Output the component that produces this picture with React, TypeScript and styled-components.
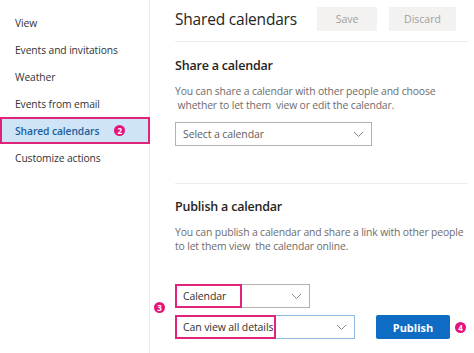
import styled, { createGlobalStyle } from "styled-components";

const GlobalStyle = createGlobalStyle`
    body {
        margin: 0;
        background: #ffffff;
        font-family: "Open Sans", "Noto Sans", sans-serif;
        color: #323130;
    }
`

const Page = styled.div`
    display: flex;
    flex-direction: row;
    width: 474px;
    height: 353px;
    overflow: hidden;
`

const Sidebar = styled.nav`
    width: 150px;
    flex-shrink: 0;
    border-right: 1px solid #ebebeb;
    padding-top: 9px;
    box-sizing: border-box;
    display: flex;
    flex-direction: column;
`

const NavItem = styled.div<{ $active?: boolean }>`
    height: 27px;
    flex-shrink: 0;
    display: flex;
    align-items: center;
    gap: 15px;
    box-sizing: border-box;
    font-size: 10.3px;
    letter-spacing: -0.1px;
    color: ${(p) => (p.$active ? "#1b5f9e" : "#333333")};
    font-weight: ${(p) => (p.$active ? 600 : 400)};
    background: ${(p) => (p.$active ? "#cfe4f6" : "transparent")};
    border: ${(p) => (p.$active ? "2px solid #e0247c" : "none")};
    padding-left: ${(p) => (p.$active ? "13px" : "15px")};
    margin-right: -1px;
`

const Badge = styled.span`
    display: inline-flex;
    width: 11px;
    height: 11px;
    border-radius: 50%;
    background: #e6137a;
    color: #ffffff;
    font-size: 8px;
    font-weight: 700;
    letter-spacing: 0;
    justify-content: center;
    align-items: center;
    line-height: 1;
    flex-shrink: 0;
`

const Main = styled.main`
    flex: 1;
    padding: 0 10px 0 25px;
    display: flex;
    flex-direction: column;
    & > * {
        flex-shrink: 0;
    }
`

const Header = styled.div`
    height: 41px;
    border-bottom: 1px solid #ededed;
    display: flex;
    align-items: flex-start;
`

const Title = styled.h1`
    margin: 7px 0 0 0;
    font-size: 15.5px;
    font-weight: 400;
    letter-spacing: -0.2px;
    line-height: 24px;
    color: #252423;
    width: 142px;
    white-space: nowrap;
`

const GrayButton = styled.button<{ $w: number }>`
    margin-top: 7px;
    margin-right: 12px;
    width: ${(p) => p.$w}px;
    height: 24px;
    border: none;
    background: #f3f2f1;
    color: #a19f9d;
    font-family: "Open Sans", sans-serif;
    font-size: 10.5px;
    padding: 0;
`

const Section = styled.section<{ $divider?: boolean }>`
    display: flex;
    flex-direction: column;
    padding-bottom: ${(p) => (p.$divider ? "37px" : "0")};
    border-bottom: ${(p) => (p.$divider ? "1px solid #ededed" : "none")};
`

const SectionTitle = styled.h2<{ $top: number }>`
    margin: ${(p) => p.$top}px 0 0 0;
    font-size: 12.5px;
    font-weight: 600;
    letter-spacing: -0.2px;
    line-height: 20px;
    color: #252423;
`

const Desc = styled.p`
    margin: 8px 0 0 0;
    font-size: 10.4px;
    letter-spacing: -0.15px;
    line-height: 14px;
    color: #6e6d6c;
    white-space: nowrap;
`

const Select = styled.div<{ $w: number; $blue?: boolean }>`
    position: relative;
    width: ${(p) => p.$w}px;
    height: 24px;
    box-sizing: border-box;
    border: 1px solid ${(p) => (p.$blue ? "#8fb6dc" : "#b3b0ad")};
    display: flex;
    align-items: center;
    justify-content: space-between;
    padding: 0 7px 0 7px;
    font-size: 10.5px;
    letter-spacing: -0.1px;
    color: #323130;
    background: #fff;
`

const Placeholder = styled.span`
    color: #605e5c;
`

const Highlight = styled.div<{ $w: number }>`
    position: absolute;
    left: -1px;
    top: -1px;
    width: ${(p) => p.$w}px;
    height: 24px;
    box-sizing: border-box;
    border: 2px solid #e0247c;
`

const Controls = styled.div`
    position: relative;
    margin-top: 31px;
    display: flex;
    flex-direction: column;
    gap: 7px;
`

const Row = styled.div`
    display: flex;
    align-items: center;
`

const PublishButton = styled.button`
    margin-left: 21px;
    width: 74px;
    height: 24px;
    border: none;
    border-radius: 2px;
    background: #0f6cc4;
    color: #ffffff;
    font-family: "Open Sans", sans-serif;
    font-weight: 700;
    font-size: 11px;
    padding: 0;
`

const FloatBadge = styled(Badge)<{ $left: number; $top: number }>`
    position: absolute;
    left: ${(p) => p.$left}px;
    top: ${(p) => p.$top}px;
`

function Chevron() {
    return (
        <svg width="11" height="7" viewBox="0 0 11 7">
            <path d="M1 1 L5.5 5.5 L10 1" fill="none" stroke="#8a8886" strokeWidth="1" />
        </svg>
    );
}

const navItems = ["View", "Events and invitations", "Weather", "Events from email", "Shared calendars", "Customize actions"];

export default function App() {
    return (
        <>
            <GlobalStyle />
            <Page>
                <Sidebar>
                    {navItems.map((item) => (
                        <NavItem key={item} $active={item === "Shared calendars"}>
                            {item}
                            {item === "Shared calendars" && <Badge>2</Badge>}
                        </NavItem>
                    ))}
                </Sidebar>
                <Main>
                    <Header>
                        <Title>Shared calendars</Title>
                        <GrayButton $w={60}>Save</GrayButton>
                        <GrayButton $w={67}>Discard</GrayButton>
                    </Header>

                    <Section $divider>
                        <SectionTitle $top={14}>Share a calendar</SectionTitle>
                        <Desc>
                            You can share a calendar with other people and choose<br />
                            &nbsp;whether to let them &nbsp;view or edit the calendar.
                        </Desc>
                        <div style={{ marginTop: 10 }}>
                            <Select $w={197}>
                                <Placeholder>Select a calendar</Placeholder>
                                <Chevron />
                            </Select>
                        </div>
                    </Section>

                    <Section>
                        <SectionTitle $top={13}>Publish a calendar</SectionTitle>
                        <Desc>
                            You can publish a calendar and share a link with other people<br />
                            to let them view &nbsp;the calendar online.
                        </Desc>
                        <Controls>
                            <Row>
                                <Select $w={135}>
                                    <Highlight $w={67} />
                                    <span>Calendar</span>
                                    <Chevron />
                                </Select>
                            </Row>
                            <Row>
                                <Select $w={180} $blue>
                                    <Highlight $w={101} />
                                    <span>Can view all details</span>
                                    <Chevron />
                                </Select>
                                <PublishButton>Publish</PublishButton>
                            </Row>
                            <FloatBadge $left={-21} $top={18}>3</FloatBadge>
                            <FloatBadge $left={280} $top={38}>4</FloatBadge>
                        </Controls>
                    </Section>
                </Main>
            </Page>
        </>
    );
}
